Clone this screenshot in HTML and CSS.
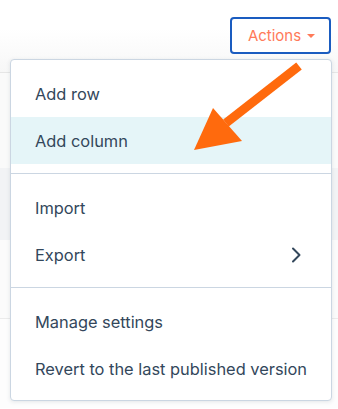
FILE: index.html
```html
<!DOCTYPE html>
<html>
<head>
<meta charset="utf-8">
<link rel="stylesheet" href="styles.css">
</head>
<body>
<div class="page">
  <div class="toolbar">
    <button class="actions">Actions <span class="caret"></span></button>
  </div>
  <div class="band band-a"></div>
  <div class="band band-b"></div>
  <div class="band band-c"></div>
  <div class="band band-d"></div>

  <div class="menu">
    <div class="section">
      <div class="item">Add row</div>
      <div class="item hover">Add column</div>
    </div>
    <div class="section">
      <div class="item">Import</div>
      <div class="item">Export
        <svg class="chev" width="12" height="18" viewBox="0 0 12 18"><path d="M3 2.5 L9.5 9 L3 15.5" fill="none" stroke="#33475b" stroke-width="2" stroke-linecap="round" stroke-linejoin="round"/></svg>
      </div>
    </div>
    <div class="section">
      <div class="item">Manage settings</div>
      <div class="item">Revert to the last published version</div>
    </div>
  </div>

  <svg class="arrow" width="338" height="409" viewBox="0 0 338 409">
    <line x1="299" y1="66" x2="226" y2="123" stroke="#ff6a0d" stroke-width="9" stroke-linecap="butt"/>
    <polygon points="194,150 213,108 242,141" fill="#ff6a0d"/>
  </svg>
</div>
</body>
</html>
```
FILE: styles.css
```css
* { box-sizing: border-box; }
html, body { margin: 0; padding: 0; }
body {
  width: 338px;
  height: 409px;
  overflow: hidden;
  background: #ffffff;
  font-family: "Inter", "Open Sans", sans-serif;
  color: #33475b;
}
.page {
  position: relative;
  width: 338px;
  height: 409px;
}
.toolbar {
  height: 73px;
  display: flex;
  justify-content: flex-end;
  align-items: flex-start;
  padding: 17px 7px 0 0;
  background: linear-gradient(#ffffff 0%, #ffffff 40%, #f7f7f7 100%);
  border-bottom: 1px solid #e6e6e6;
}
.actions {
  width: 101px;
  height: 37px;
  border: 2px solid #1a5cc0;
  border-radius: 4px;
  background: #ffffff;
  color: #ff7a59;
  font-family: "Inter", "Open Sans", sans-serif;
  font-size: 15px;
  display: flex;
  align-items: center;
  justify-content: center;
  gap: 6px;
  padding: 0 0 1px 2px;
}
.caret {
  width: 0;
  height: 0;
  border-left: 4px solid transparent;
  border-right: 4px solid transparent;
  border-top: 4px solid #ff7a59;
  margin-top: 1px;
}
.band-a { height: 95px; background: #fafafa; }
.band-b { height: 72px; background: #f2f3f5; }
.band-c { height: 79px; background: #fbfbfb; border-bottom: 1px solid #ebebeb; }
.band-d { height: 89px; background: #fdfdfd; }

.menu {
  position: absolute;
  left: 10px;
  top: 59px;
  width: 322px;
  height: 342px;
  background: #ffffff;
  border: 1px solid #cbd6e2;
  border-radius: 4px;
  box-shadow: 0 1px 4px rgba(45, 62, 80, 0.12);
  display: flex;
  flex-direction: column;
}
.section {
  padding: 10px 0 9px;
  border-bottom: 1px solid #cbd6e2;
}
.section:last-child { border-bottom: none; }
.item {
  height: 47px;
  display: flex;
  align-items: center;
  justify-content: space-between;
  padding: 0 29px 0 24px;
  font-size: 16.4px;
  color: #33475b;
  white-space: nowrap;
}
.item.hover { background: #e5f5f8; }
.chev { display: block; }
.arrow {
  position: absolute;
  left: 0;
  top: 0;
  pointer-events: none;
}
```
